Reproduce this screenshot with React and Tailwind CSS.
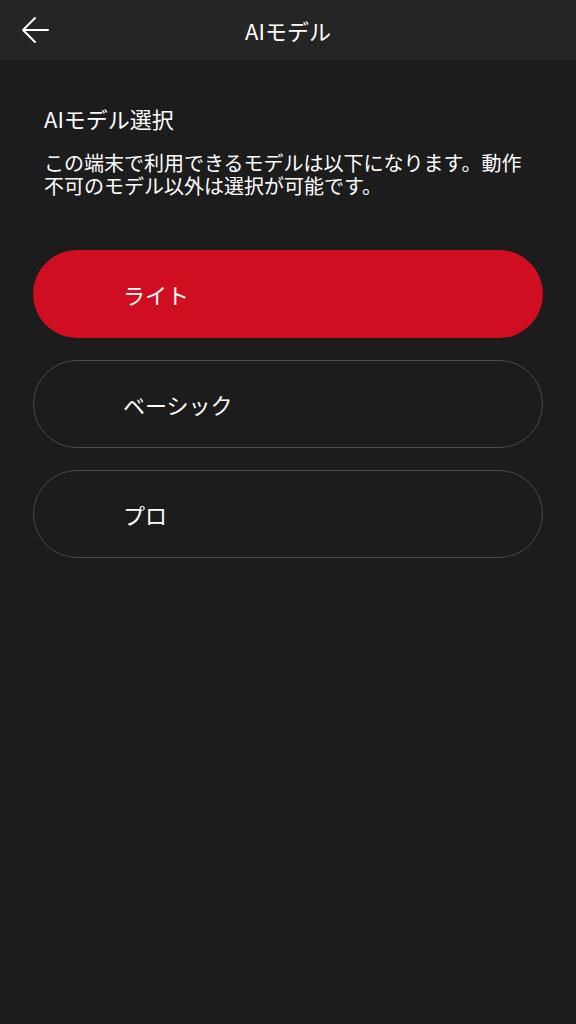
export default function App() {
  const models = [
    { name: "ライト", selected: true },
    { name: "ベーシック", selected: false },
    { name: "プロ", selected: false },
  ];

  return (
    <div
      className="min-h-[1024px] w-full bg-[#1c1c1c] text-white"
      style={{ fontFamily: '"Noto Sans CJK JP", "Noto Sans", sans-serif' }}
    >
      <header className="grid h-[60px] grid-cols-[1fr_auto_1fr] items-center bg-[#252525]">
        <button className="ml-[21px] flex h-[28px] w-[28px] items-center justify-center">
          <svg width="28" height="28" viewBox="0 0 28 28" fill="none" stroke="white" strokeWidth="2" strokeLinecap="round" strokeLinejoin="round">
            <path d="M27 14H2M14 2L2 14L14 26" />
          </svg>
        </button>
        <h1 className="text-[22px] leading-[30px]">AIモデル</h1>
        <div />
      </header>

      <main className="px-[44px] pt-[43px]">
        <h2 className="text-[22px] leading-[30px]">AIモデル選択</h2>
        <p className="mt-[18px] text-[20px] leading-[23px]">
          この端末で利用できるモデルは以下になります。動作不可のモデル以外は選択が可能です。
        </p>
      </main>

      <div className="mt-[53px] flex flex-col gap-[22px] px-[33px]">
        {models.map((m) => (
          <button
            key={m.name}
            className={
              m.selected
                ? "flex h-[88px] items-center rounded-full bg-[#cf0e22] pl-[90px] text-[22px] text-white"
                : "flex h-[88px] items-center rounded-full border border-[#4a4a4a] pl-[89px] text-[22px] text-white"
            }
          >
            {m.name}
          </button>
        ))}
      </div>
    </div>
  );
}
